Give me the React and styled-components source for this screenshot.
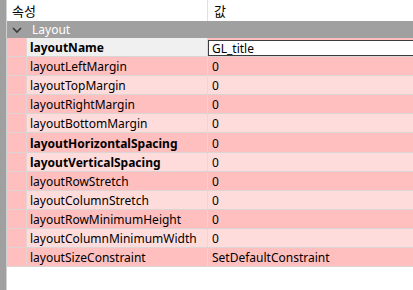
import React from 'react'
import styled, { createGlobalStyle } from 'styled-components'

const GlobalStyle = createGlobalStyle`
    html, body {
        margin: 0;
        padding: 0;
        background: #ffffff;
    }
    body {
        font-family: 'Noto Sans', 'Noto Sans CJK KR', sans-serif;
        font-size: 12px;
        color: #000000;
    }
`

const props = [
    { name: 'layoutName', value: 'GL_title', bold: true, editing: true },
    { name: 'layoutLeftMargin', value: '0' },
    { name: 'layoutTopMargin', value: '0' },
    { name: 'layoutRightMargin', value: '0' },
    { name: 'layoutBottomMargin', value: '0' },
    { name: 'layoutHorizontalSpacing', value: '0', bold: true },
    { name: 'layoutVerticalSpacing', value: '0', bold: true },
    { name: 'layoutRowStretch', value: '0' },
    { name: 'layoutColumnStretch', value: '0' },
    { name: 'layoutRowMinimumHeight', value: '0' },
    { name: 'layoutColumnMinimumWidth', value: '0' },
    { name: 'layoutSizeConstraint', value: 'SetDefaultConstraint' },
]

const Panel = styled.div`
    display: flex;
    width: 413px;
    height: 290px;
    overflow: hidden;
`

const Strip = styled.div`
    width: 6px;
    flex: none;
    background: #a0a0a0;
    border-right: 1px solid #d0d0d0;
`

const Tree = styled.div`
    flex: 1;
    display: flex;
    flex-direction: column;
    min-width: 0;
`

const HeaderRow = styled.div`
    display: grid;
    grid-template-columns: 201px 1fr;
    height: 21px;
    background: #ffffff;
`

const HeaderCell = styled.div`
    display: flex;
    align-items: center;
    padding-left: ${({ $pad }) => $pad}px;
    padding-bottom: 1px;
    font-size: 13px;
    border-right: ${({ $divider }) => ($divider ? '1px solid #e0e0e0' : 'none')};
    white-space: nowrap;
`

const GroupRow = styled.div`
    display: flex;
    align-items: center;
    height: 17px;
    background: #a0a0a0;
    color: #ffffff;
    gap: 10px;
    padding-left: 5px;
`

const Chevron = styled.svg`
    width: 10px;
    height: 10px;
    flex: none;
`

const Row = styled.div`
    display: grid;
    grid-template-columns: 20px 181px 1fr;
    height: 19.1px;
    box-sizing: border-box;
    border-bottom: 1px solid #ddd4d4;
    background: ${({ $odd }) => ($odd ? '#ffdcdc' : '#ffbfbf')};
`

const Indent = styled.div`
    background: #ffbfbf;
    border-right: 1px solid #e6d2d2;
`

const NameCell = styled.div`
    display: flex;
    align-items: center;
    padding: 1px 0 0 3px;
    font-weight: ${({ $bold }) => ($bold ? 700 : 400)};
    background: ${({ $selected }) => ($selected ? '#f0f0f0' : 'transparent')};
    border-right: 1px solid #dcdcdc;
    white-space: nowrap;
    overflow: hidden;
`

const ValueCell = styled.div`
    display: flex;
    align-items: center;
    padding: 1px 0 0 ${({ $pad }) => $pad}px;
    white-space: nowrap;
    overflow: hidden;
`

const Editor = styled.div`
    flex: 1;
    display: flex;
    align-items: center;
    align-self: stretch;
    box-sizing: border-box;
    margin: 1px 0 0;
    padding-left: 3px;
    background: #ffffff;
    border: 1px solid #3c3c3c;
    border-right: none;
    white-space: nowrap;
`

const App = () => {
    return (
        <>
            <GlobalStyle />
            <Panel>
                <Strip />
                <Tree>
                    <HeaderRow>
                        <HeaderCell $pad={5} $divider>
                            속성
                        </HeaderCell>
                        <HeaderCell $pad={6}>값</HeaderCell>
                    </HeaderRow>
                    <GroupRow>
                        <Chevron viewBox="0 0 10 10">
                            <path
                                d="M1 3 L5 7 L9 3"
                                fill="none"
                                stroke="#3a3a3a"
                                strokeWidth="1.6"
                            />
                        </Chevron>
                        <span>Layout</span>
                    </GroupRow>
                    {props.map((p, i) => (
                        <Row key={p.name} $odd={i % 2 === 0 && i > 0}>
                            <Indent />
                            <NameCell $bold={p.bold} $selected={p.editing}>
                                {p.name}
                            </NameCell>
                            {p.editing ? (
                                <ValueCell $pad={0}>
                                    <Editor>{p.value}</Editor>
                                </ValueCell>
                            ) : (
                                <ValueCell $pad={4}>{p.value}</ValueCell>
                            )}
                        </Row>
                    ))}
                </Tree>
            </Panel>
        </>
    )
}

export default App
